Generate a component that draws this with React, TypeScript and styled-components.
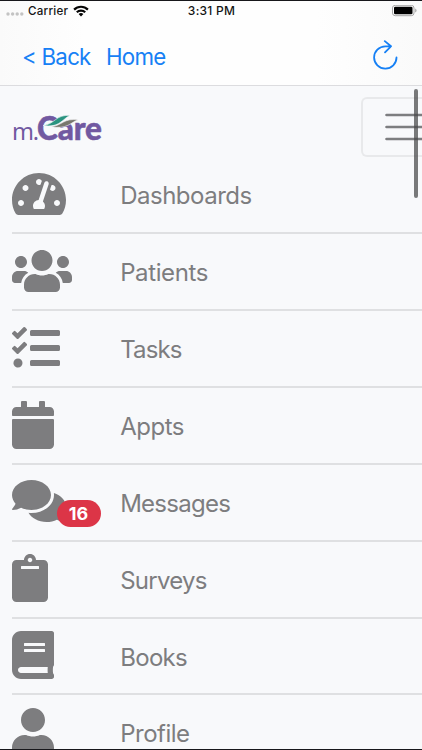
import React from "react";
import styled, { createGlobalStyle } from "styled-components";
import {
  FaTachometerAlt, FaUsers, FaTasks, FaCalendar, FaComments, FaClipboard, FaBook, FaUser,
} from "react-icons/fa";
import type { IconType } from "react-icons";

const GlobalStyle = createGlobalStyle`
  *, *::before, *::after { box-sizing: border-box; }
  body { margin: 0; overflow: hidden; background: #f8f9fb; font-family: Inter, "Liberation Sans", sans-serif; }
`;

const Screen = styled.div`
  position: relative;
  display: flex;
  flex-direction: column;
  height: 750px;
  width: 422px;
  overflow: hidden;
  background: #f8f9fb;
  border-top: 1px solid #17171b;
  border-bottom: 1px solid #17171b;
`;
const Header = styled.header`
  flex: none;
  height: 85px;
  border-bottom: 1px solid #dcdcdf;
  background: linear-gradient(90deg, #fafafa 0, #fefefe 20%, #fefefe 75%, #fafafa 100%);
`;
const StatusBar = styled.div`
  display: grid;
  grid-template-columns: 1fr auto 1fr;
  align-items: center;
  height: 20px;
  padding: 0 5px 0 6px;
  font-size: 11.6px;
  font-weight: 500;
  line-height: 20px;
  color: #151515;
`;
const Carrier = styled.div`
  display: flex;
  align-items: center;
  height: 19px;
`;
const SignalDots = styled.svg`
  width: 18px;
  height: 4px;
  margin: 5px 4px 0 0;
`;
const CarrierName = styled.span`
  width: 41px;
  letter-spacing: 0.25px;
  white-space: nowrap;
`;
const Wifi = styled.svg`
  width: 16px;
  height: 12px;
  margin-left: 4px;
  margin-top: -1px;
`;
const Clock = styled.span`
  font-size: 12px;
  line-height: 18px;
  letter-spacing: 0.25px;
`;
const Battery = styled.svg`
  justify-self: end;
  width: 25px;
  height: 12px;
`;
const NavBar = styled.nav`
  display: flex;
  align-items: center;
  height: 64px;
  padding: 7px 23px 0 22px;
`;
const NavLink = styled.a<{ $width: number }>`
  width: ${(p) => p.$width}px;
  font-size: 22.3px;
  line-height: 30px;
  letter-spacing: -0.75px;
  white-space: nowrap;
  color: #1680f5;
`;
const Refresh = styled.svg`
  width: 27px;
  height: 30px;
  margin: -4px 0 0 auto;
`;
const Brand = styled.div`
  flex: none;
  display: flex;
  justify-content: space-between;
  height: 71.5px;
  padding: 11px 0 0 12px;
`;
const Logo = styled.div`
  position: relative;
  display: flex;
  align-items: baseline;
  width: 92px;
  height: 36px;
  margin-top: 13px;
  line-height: 36px;
  color: #7159a1;
`;
const LogoPrefix = styled.span`
  width: 25px;
  font-family: "Noto Sans", sans-serif;
  font-size: 23.5px;
  letter-spacing: -1.2px;
`;
const LogoWord = styled.span`
  font-family: Lato, sans-serif;
  font-size: 31.5px;
  font-weight: 900;
  letter-spacing: -0.1px;
  -webkit-text-stroke: 0.5px #7159a1;
`;
const Leaf = styled.svg`
  position: absolute;
  left: 31px;
  top: 4px;
  width: 36px;
  height: 18px;
`;
const Toggler = styled.button`
  display: flex;
  align-items: center;
  justify-content: flex-end;
  width: 61px;
  height: 60px;
  padding: 0;
  border: 2px solid #e8e9eb;
  border-right: 0;
  border-radius: 6px 0 0 6px;
  background: transparent;
`;
const Menu = styled.ul`
  margin: 0;
  padding: 0 0 0 11.6px;
  list-style: none;
`;
const Item = styled.li`
  display: flex;
  height: 76.85px;
  padding-top: 12.6px;
  border-bottom: 2px solid #dfe0e2;
  color: #7d7d7f;
`;
const IconCell = styled.div<{ $glyphWidth: number }>`
  position: relative;
  width: 108.6px;
  height: 48px;
  svg { display: block; height: 48px; width: ${(p) => p.$glyphWidth}px; }
`;
const Badge = styled.span`
  position: absolute;
  left: 45px;
  top: 23px;
  width: 44px;
  height: 27px;
  border-radius: 14px;
  background: #dc3547;
  color: #fff;
  font-size: 18px;
  font-weight: 700;
  line-height: 27px;
  text-align: center;
`;
const Label = styled.span<{ $tracking?: number }>`
  padding-top: 10.4px;
  font-size: 24px;
  line-height: 32px;
  letter-spacing: ${(p) => p.$tracking ?? -0.6}px;
`;
const ScrollThumb = styled.div`
  position: absolute;
  left: 414px;
  top: 88px;
  width: 4px;
  height: 109px;
  border-radius: 2px;
  background: rgba(70, 70, 72, 0.72);
`;

const items: { label: string; Icon: IconType; width: number; badge?: number; tracking?: number }[] = [
  { label: "Dashboards", Icon: FaTachometerAlt, width: 54, tracking: -0.5 },
  { label: "Patients", Icon: FaUsers, width: 60, tracking: -0.4 },
  { label: "Tasks", Icon: FaTasks, width: 48, tracking: -0.85 },
  { label: "Appts", Icon: FaCalendar, width: 42, tracking: -0.5 },
  { label: "Messages", Icon: FaComments, width: 54, badge: 16, tracking: -0.75 },
  { label: "Surveys", Icon: FaClipboard, width: 36, tracking: -0.75 },
  { label: "Books", Icon: FaBook, width: 42, tracking: -0.7 },
  { label: "Profile", Icon: FaUser, width: 42, tracking: -0.5 },
];

export default function App() {
  return (
    <>
      <GlobalStyle />
      <Screen>
        <Header>
          <StatusBar>
            <Carrier>
              <SignalDots viewBox="0 0 18 4" fill="#c3c3c3">
                {[2, 6.6, 11.2, 15.8].map((x) => <circle key={x} cx={x} cy="2" r="1.7" />)}
              </SignalDots>
              <CarrierName>Carrier</CarrierName>
              <Wifi viewBox="0 0 16 12" fill="none" stroke="#050505" strokeWidth="2.2">
                <path d="M1.1 4.6a9.8 9.8 0 0 1 13.8 0M3.8 7.3a6 6 0 0 1 8.4 0" />
                <path d="M8 11.5 5.6 9.1a3.4 3.4 0 0 1 4.8 0Z" fill="#050505" stroke="none" />
              </Wifi>
            </Carrier>
            <Clock>3:31 PM</Clock>
            <Battery viewBox="0 0 25 12">
              <rect x="0.5" y="0.3" width="21.5" height="10.4" rx="2.7" fill="#fff" stroke="#a6a6a6" />
              <rect x="2" y="1.8" width="18.5" height="7.4" rx="1.3" fill="#000" />
              <path d="M23.2 3.5v4q1.3-.5 1.3-2t-1.3-2" fill="#a6a6a6" />
            </Battery>
          </StatusBar>
          <NavBar>
            <NavLink $width={84}>&lt; Back</NavLink>
            <NavLink $width={70}>Home</NavLink>
            <Refresh viewBox="0 0 27 30" fill="none" stroke="#1680f5" strokeWidth="1.8" strokeLinecap="round" strokeLinejoin="round">
              <path d="M24.5 17.4A11.2 11.2 0 1 1 13.3 6.3H19M12.8 1.1l6.2 5.2-6 6" />
            </Refresh>
          </NavBar>
        </Header>
        <Brand>
          <Logo>
            <LogoPrefix>m.</LogoPrefix>
            <LogoWord>Care</LogoWord>
            <Leaf viewBox="0 0 36 18">
              <path d="M0 11.5C11 11 13 0 27 1.5C19 5 17 14 0 11.5Z" fill="#2a9480" stroke="#f8f9fb" strokeWidth=".6" />
              <path d="M8 12.5C19 12 21 3.5 35 6C28 8 24 16 8 12.5Z" fill="#77776d" stroke="#f8f9fb" strokeWidth=".6" />
            </Leaf>
          </Logo>
          <Toggler aria-label="Menu">
            <svg width="37" height="30" viewBox="0 0 37 30" stroke="#7d7e80" strokeWidth="2.6" strokeLinecap="round">
              <path d="M1.5 3H40M1.5 15H40M1.5 27H40" />
            </svg>
          </Toggler>
        </Brand>
        <Menu>
          {items.map(({ label, Icon, width, badge, tracking }) => (
            <Item key={label}>
              <IconCell $glyphWidth={width}>
                <Icon />
                {badge && <Badge>{badge}</Badge>}
              </IconCell>
              <Label $tracking={tracking}>{label}</Label>
            </Item>
          ))}
        </Menu>
        <ScrollThumb />
      </Screen>
    </>
  );
}
